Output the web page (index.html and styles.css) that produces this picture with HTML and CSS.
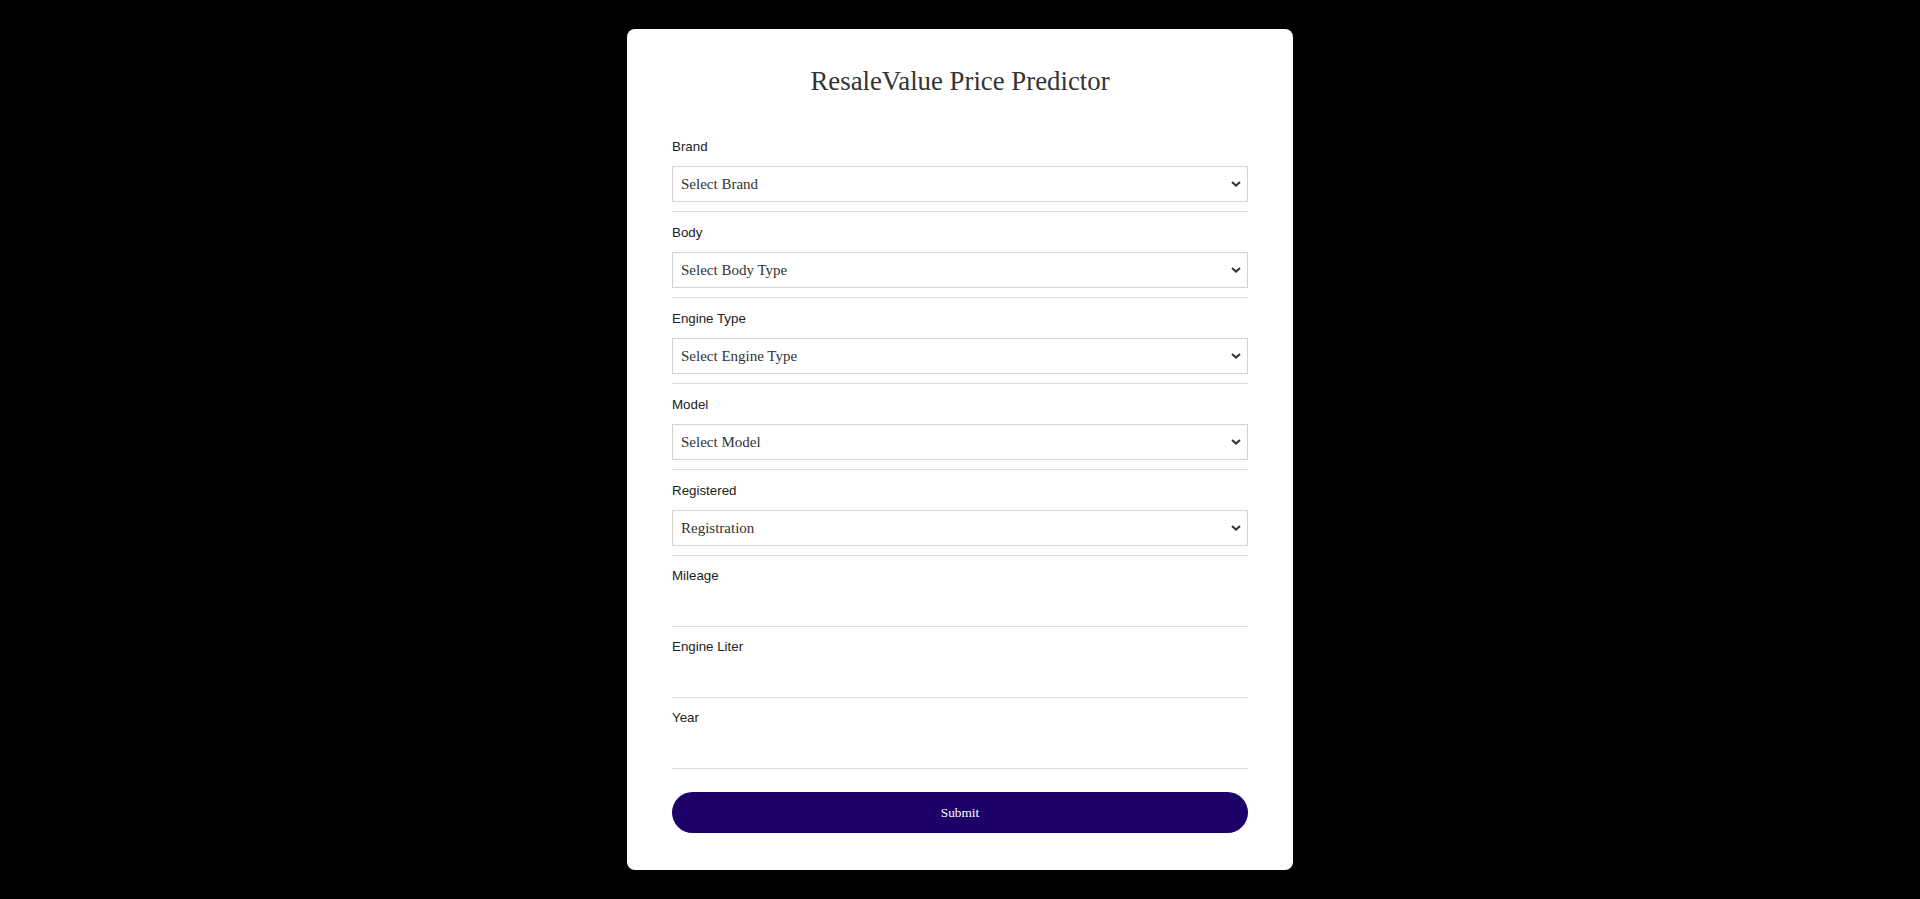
FILE: index.html
```html
<!DOCTYPE html>
<html lang="en">
<head>
<meta charset="utf-8">
<title>ResaleValue Price Predictor</title>
<link rel="stylesheet" href="styles.css">
</head>
<body>
<main class="card">
  <h1 class="title">ResaleValue Price Predictor</h1>
  <form class="form">
    <div class="group group-select">
      <label class="label">Brand</label>
      <div class="select-wrap">
        <select class="select"><option>Select Brand</option></select>
        <svg class="chev" width="10" height="6" viewBox="0 0 10 6"><path d="M1 1 L5 4.6 L9 1" fill="none" stroke="#333" stroke-width="2"/></svg>
      </div>
    </div>
    <div class="group group-select">
      <label class="label">Body</label>
      <div class="select-wrap">
        <select class="select"><option>Select Body Type</option></select>
        <svg class="chev" width="10" height="6" viewBox="0 0 10 6"><path d="M1 1 L5 4.6 L9 1" fill="none" stroke="#333" stroke-width="2"/></svg>
      </div>
    </div>
    <div class="group group-select">
      <label class="label">Engine Type</label>
      <div class="select-wrap">
        <select class="select"><option>Select Engine Type</option></select>
        <svg class="chev" width="10" height="6" viewBox="0 0 10 6"><path d="M1 1 L5 4.6 L9 1" fill="none" stroke="#333" stroke-width="2"/></svg>
      </div>
    </div>
    <div class="group group-select">
      <label class="label">Model</label>
      <div class="select-wrap">
        <select class="select"><option>Select Model</option></select>
        <svg class="chev" width="10" height="6" viewBox="0 0 10 6"><path d="M1 1 L5 4.6 L9 1" fill="none" stroke="#333" stroke-width="2"/></svg>
      </div>
    </div>
    <div class="group group-select">
      <label class="label">Registered</label>
      <div class="select-wrap">
        <select class="select"><option>Registration</option></select>
        <svg class="chev" width="10" height="6" viewBox="0 0 10 6"><path d="M1 1 L5 4.6 L9 1" fill="none" stroke="#333" stroke-width="2"/></svg>
      </div>
    </div>
    <div class="group group-input">
      <label class="label">Mileage</label>
      <input class="input" type="text">
    </div>
    <div class="group group-input">
      <label class="label">Engine Liter</label>
      <input class="input" type="text">
    </div>
    <div class="group group-input">
      <label class="label">Year</label>
      <input class="input" type="text">
    </div>
    <button class="submit" type="button">Submit</button>
  </form>
</main>
</body>
</html>
```
FILE: styles.css
```css
* { box-sizing: border-box; }
html, body { margin: 0; padding: 0; }
body {
  background: #000;
  min-height: 100vh;
  display: flex;
  align-items: center;
  justify-content: center;
  font-family: "Liberation Serif", "Times New Roman", serif;
}
.card {
  width: 666px;
  background: #fff;
  border-radius: 8px;
  padding: 37px 45px 37px;
}
.title {
  margin: 0 0 29px;
  font-size: 26.8px;
  line-height: 31px;
  font-weight: normal;
  color: #333;
  text-align: center;
}
.form { display: flex; flex-direction: column; }
.group {
  display: flex;
  flex-direction: column;
}
.label {
  display: block;
  font-family: "Liberation Sans", Arial, sans-serif;
  font-size: 13.33px;
  line-height: 16px;
  color: #222;
}
.group-select {
  padding: 13px 0 9px;
  border-bottom: 1px solid #ddd;
}
.group-select .label { margin-bottom: 11px; }
.select-wrap { position: relative; }
.select {
  appearance: none;
  -webkit-appearance: none;
  width: 100%;
  height: 36px;
  margin: 0;
  padding: 0 30px 0 8px;
  border: 1px solid #d3d3d3;
  border-radius: 0;
  background: #fff;
  font-family: "Liberation Serif", "Times New Roman", serif;
  font-size: 15px;
  color: #333;
}
.chev {
  position: absolute;
  right: 7px;
  top: 15px;
  pointer-events: none;
}
.group-input { padding-top: 12px; }
.input {
  width: 100%;
  height: 43px;
  margin: 0;
  border: none;
  border-bottom: 1px solid #ddd;
  padding: 0 8px;
  outline: none;
  font-size: 15px;
  background: transparent;
}
.submit {
  margin-top: 23px;
  height: 41px;
  width: 100%;
  border: none;
  border-radius: 21px;
  background: #1d0068;
  color: #fff;
  font-family: "Liberation Serif", "Times New Roman", serif;
  font-size: 13.33px;
  cursor: pointer;
}
```
